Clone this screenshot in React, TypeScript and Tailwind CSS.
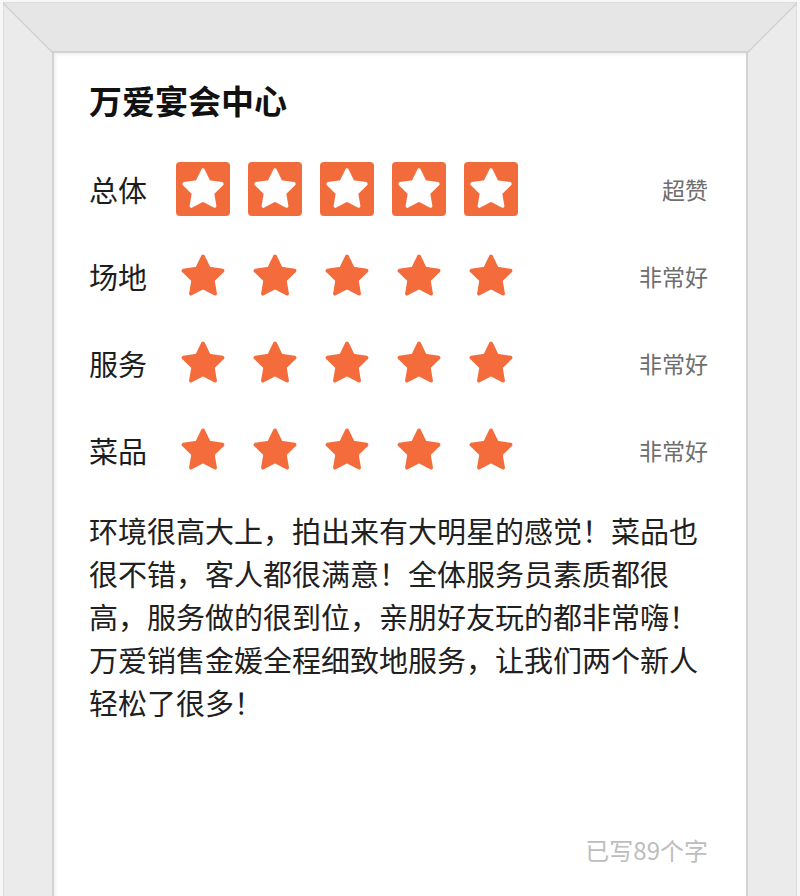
const cjk = '[font-family:"Noto_Sans_CJK_SC","Noto_Sans",sans-serif]';

const STAR_PATH =
  'M12 2.6l2.9 5.9 6.5.95-4.7 4.6 1.1 6.45L12 17.45l-5.8 3.05 1.1-6.45-4.7-4.6 6.5-.95z';

const ratings = [
  { label: '总体', verdict: '超赞', boxed: true },
  { label: '场地', verdict: '非常好', boxed: false },
  { label: '服务', verdict: '非常好', boxed: false },
  { label: '菜品', verdict: '非常好', boxed: false },
];

const Star = ({ size, color }: { size: number; color: string }) => (
  <svg width={size} height={size} viewBox="0 0 24 24" aria-hidden="true">
    <path d={STAR_PATH} fill={color} stroke={color} strokeWidth={1.8} strokeLinejoin="round" />
  </svg>
);

const RatingRow = ({ label, verdict, boxed }: { label: string; verdict: string; boxed: boolean }) => (
  <div className="flex h-[54px] items-center">
    <span className="w-[87px] text-[29px] leading-none text-[#1d1d1d]">{label}</span>
    <div className="flex gap-[18px]">
      {Array.from({ length: 5 }).map((_, i) =>
        boxed ? (
          <span
            key={i}
            className="flex h-[54px] w-[54px] items-center justify-center rounded-[4px] bg-[#f26b3b]"
          >
            <Star size={48} color="#ffffff" />
          </span>
        ) : (
          <span key={i} className="flex h-[54px] w-[54px] items-center justify-center">
            <Star size={50} color="#f46c3b" />
          </span>
        ),
      )}
    </div>
    <span className="ml-auto text-[23px] leading-none text-[#6e6e6e]">{verdict}</span>
  </div>
);

// corner miter line of the frame
const Miter = ({ side }: { side: 'left' | 'right' }) => (
  <svg
    className={side === 'left' ? 'absolute left-0 top-0' : 'absolute right-0 top-0'}
    width="54"
    height="54"
    viewBox="0 0 54 54"
    aria-hidden="true"
  >
    {side === 'left' ? (
      <line x1="3" y1="3" x2="53" y2="53" stroke="#cfcfcf" strokeWidth="1.5" />
    ) : (
      <line x1="51" y1="3" x2="1" y2="53" stroke="#cfcfcf" strokeWidth="1.5" />
    )}
  </svg>
);

export default function App() {
  return (
    <div className={`relative h-[896px] w-[800px] overflow-hidden bg-[#f7f7f7] px-[4px] pt-[3px] ${cjk}`}>
      <div className="h-full border-x-[48px] border-t-[48px] border-b-0 border-x-[#ebebeb] border-t-[#e6e6e6] shadow-[0_0_0_1px_#dcdcdc]">
        <div className="h-full border-x-2 border-t-2 border-[#d3d3d3] bg-white pl-[35px] pr-[38px] pt-[27px] shadow-[inset_2px_2px_3px_rgba(0,0,0,0.06)]">
          <h1 className="text-[33px] font-bold leading-[40px] text-[#111]">万爱宴会中心</h1>

          <div className="mt-[42px] flex flex-col gap-[33px]">
            {ratings.map((r) => (
              <RatingRow key={r.label} {...r} />
            ))}
          </div>

          <p className="mt-[32px] text-[29px] leading-[43px] text-[#202020]">
            环境很高大上，拍出来有大明星的感觉！菜品也很不错，客人都很满意！全体服务员素质都很高，服务做的很到位，亲朋好友玩的都非常嗨！万爱销售金媛全程细致地服务，让我们两个新人轻松了很多！
          </p>

          <div className="mt-[111px] text-right text-[24px] leading-[30px] text-[#bdbdbd]">已写89个字</div>
        </div>
      </div>
      <Miter side="left" />
      <Miter side="right" />
    </div>
  );
}
